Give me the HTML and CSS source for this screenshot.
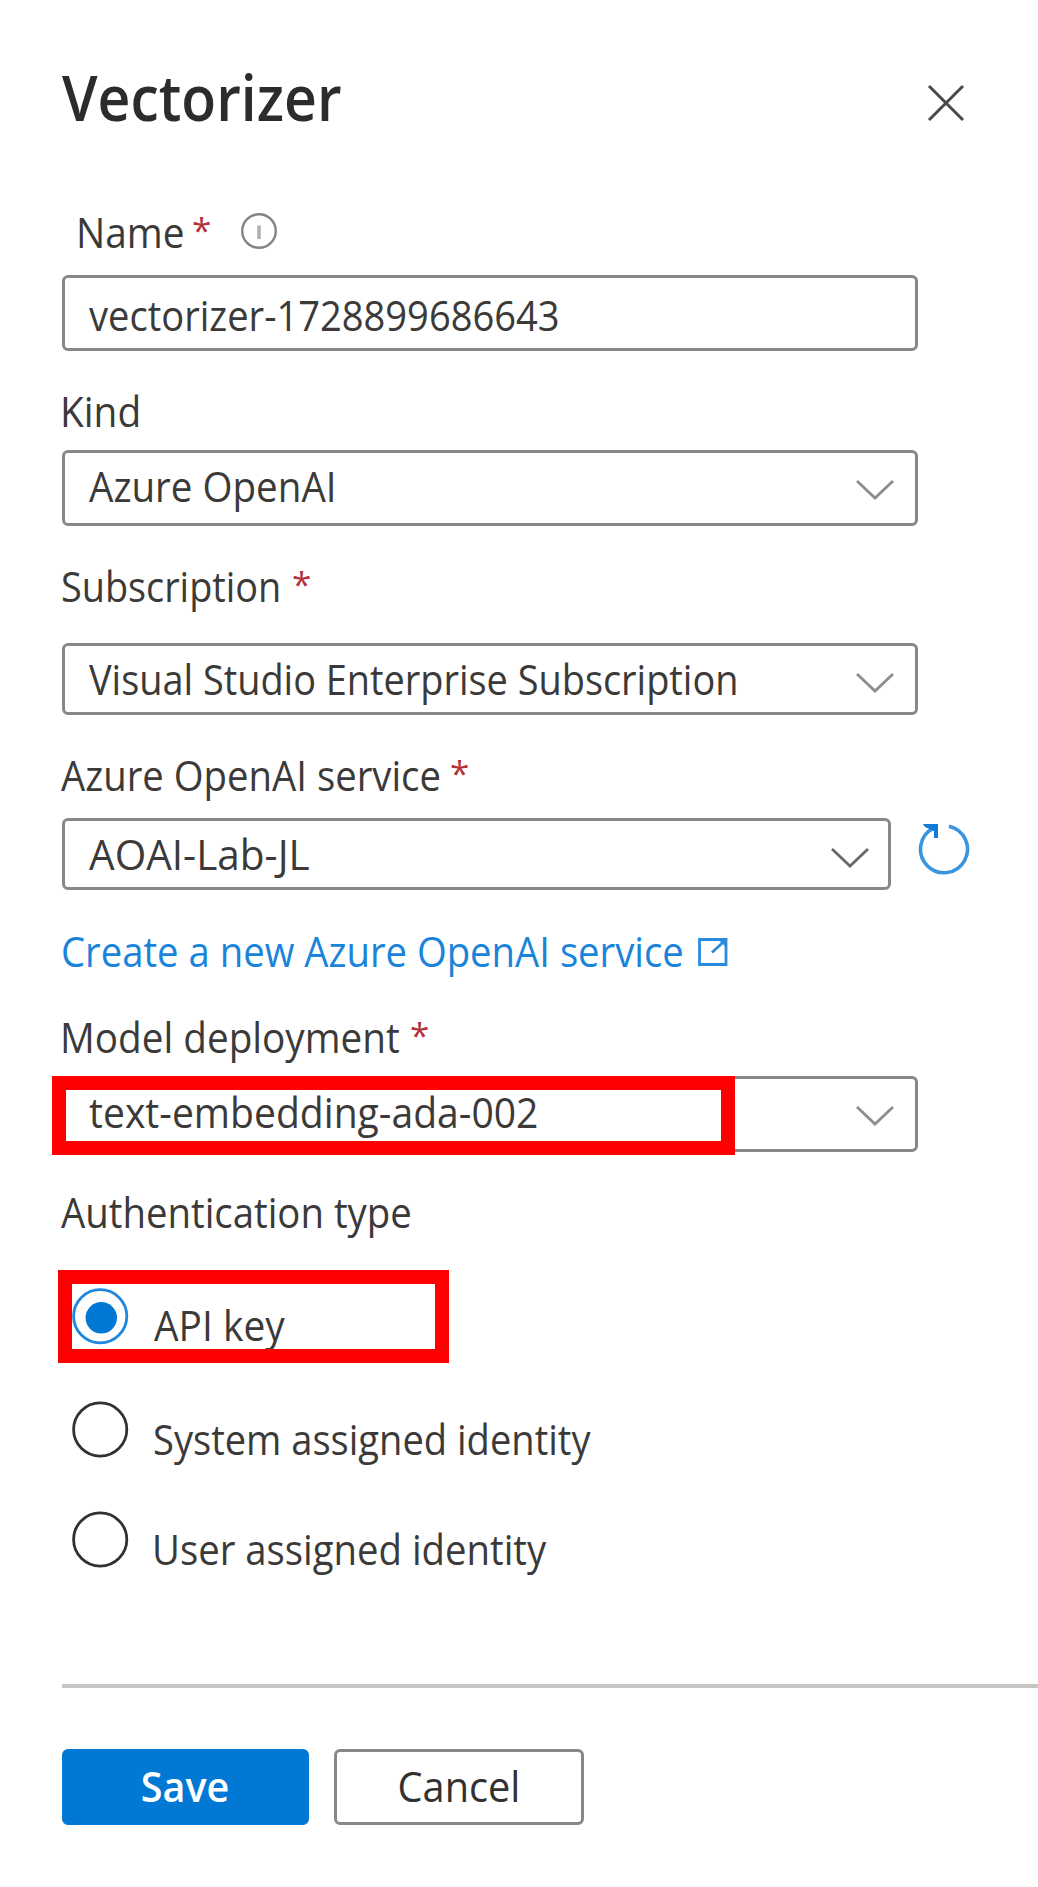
FILE: index.html
```
<!DOCTYPE html>
<html lang="en">
<head>
<meta charset="utf-8">
<title>Vectorizer</title>
<link rel="stylesheet" href="styles.css">
</head>
<body>
<main class="panel">
  <header class="header">
    <h1 class="title"><span class="fit fit-title">Vectorizer</span></h1>
    <svg class="close" width="38" height="38" viewBox="0 0 38 38"><path d="M2 2L36 36M36 2L2 36"/></svg>
  </header>

  <div class="label label-name">
    <span class="fit fit-name">Name</span><span class="star">*</span>
    <svg class="info" width="38" height="38" viewBox="0 0 38 38"><circle cx="19" cy="19" r="16.8"/><path d="M19 13.5V27"/></svg>
  </div>
  <div class="box box-name"><span class="fit fit-name-value">vectorizer-1728899686643</span></div>

  <div class="label label-kind"><span class="fit fit-kind">Kind</span></div>
  <div class="box box-kind"><span class="fit fit-openai">Azure OpenAI</span>
    <svg class="chevron" width="38" height="22" viewBox="0 0 38 22"><path d="M1 2L19 19L37 2"/></svg></div>

  <div class="label label-sub"><span class="fit fit-sub">Subscription</span><span class="star">*</span></div>
  <div class="box box-sub"><span class="fit fit-visual">Visual Studio Enterprise Subscription</span>
    <svg class="chevron" width="38" height="22" viewBox="0 0 38 22"><path d="M1 2L19 19L37 2"/></svg></div>

  <div class="label label-service"><span class="fit fit-service">Azure OpenAI service</span><span class="star">*</span></div>
  <div class="service-row">
    <div class="box box-service"><span class="fit fit-aoai">AOAI-Lab-JL</span>
      <svg class="chevron chevron-dark" width="38" height="22" viewBox="0 0 38 22"><path d="M1 2L19 19L37 2"/></svg></div>
    <svg class="refresh" width="54" height="54" viewBox="0 0 54 54"><path class="arc" d="M33 4.2A23.5 23.5 0 1 1 17 6.4"/><path class="head" d="M7 2H22V16H18V9L9 5Z"/></svg>
  </div>

  <a class="label link"><span class="fit fit-link">Create a new Azure OpenAI service</span>
    <svg class="external" width="32" height="30" viewBox="0 0 32 30"><path d="M16 2.5H2.5V27.5H29V15M29 17V2.5H16M29 2.5L15 15.5"/><path class="corner" d="M20 1.5H30V11Z"/></svg></a>

  <div class="label label-model"><span class="fit fit-model">Model deployment</span><span class="star">*</span></div>
  <div class="box box-model"><span class="fit fit-ada">text-embedding-ada-002</span>
    <svg class="chevron" width="38" height="22" viewBox="0 0 38 22"><path d="M1 2L19 19L37 2"/></svg>
    <i class="mark mark-model"></i></div>

  <div class="label label-auth"><span class="fit fit-auth">Authentication type</span></div>
  <div class="radio radio-api">
    <svg class="dial dial-on" width="57" height="57" viewBox="0 0 57 57"><circle class="ring" cx="28.2" cy="28.3" r="26.6"/><circle class="dot" cx="29.3" cy="29.8" r="15.7"/></svg>
    <span class="fit fit-api">API key</span>
    <i class="mark mark-api"></i>
  </div>
  <div class="radio radio-system">
    <svg class="dial" width="57" height="57" viewBox="0 0 57 57"><circle class="ring" cx="28.2" cy="28.5" r="26.6"/></svg>
    <span class="fit fit-system">System assigned identity</span>
  </div>
  <div class="radio radio-user">
    <svg class="dial" width="57" height="57" viewBox="0 0 57 57"><circle class="ring" cx="28.2" cy="28.5" r="26.6"/></svg>
    <span class="fit fit-user">User assigned identity</span>
  </div>

  <hr class="divider">
  <footer class="actions">
    <button class="button primary"><span class="fit fit-save">Save</span></button>
    <button class="button"><span class="fit fit-cancel">Cancel</span></button>
  </footer>
</main>
</body>
</html>
```
FILE: styles.css
```
* { box-sizing: border-box; }
body { margin: 0; background: #fff; color: #3b3a39; font: 42px/59px "Open Sans", sans-serif; }
.panel { height: 1887px; padding: 53px 0 0 62px; overflow: hidden; }
svg { display: block; flex: none; fill: none; }

.fit { display: block; flex: none; white-space: nowrap; transform: scaleX(var(--sx)); transform-origin: 0 50%; }
.fit-title { --sx: .906; }
.fit-name { --sx: .925; width: 115px; }
.fit-name-value { --sx: .907; }
.fit-kind { --sx: .925; }
.fit-openai { --sx: .918; }
.fit-sub { --sx: .9; width: 230px; }
.fit-visual { --sx: .902; }
.fit-service { --sx: .912; width: 388px; }
.fit-aoai { --sx: .965; }
.fit-link { --sx: .911; width: 636px; }
.fit-model { --sx: .921; width: 349px; }
.fit-ada { --sx: .931; }
.fit-auth { --sx: .913; }
.fit-api { --sx: .926; }
.fit-system { --sx: .907; }
.fit-user { --sx: .912; }
.fit-save { --sx: .94; transform-origin: 50% 50%; }
.fit-cancel { --sx: .945; transform-origin: 50% 50%; }

.header { display: flex; justify-content: space-between; height: 86px; padding-right: 73px; }
.title { margin: 0; font-size: 63px; font-weight: 600; line-height: 88px; color: #2d2c2b; }
.close { margin-top: 31px; stroke: #4a4948; stroke-width: 3; }

.label { display: flex; height: 57px; margin-left: -1px; }
.label-name { margin: 63px 0 0 14px; }
.label-kind { margin: 30px 0 0 -2px; }
.label-sub { margin-top: 30px; }
.label-service { margin-top: 30px; }
.label-model { margin: 29px 0 0 -2px; }
.label-auth { margin-top: 30px; }
.star { width: 20px; margin-left: 1px; color: #b5313a; font-size: 35px; line-height: 56px; }
.info { margin: 10px 0 0 28px; stroke: #858483; stroke-width: 2.4; }
.info path { stroke: #b0afae; stroke-width: 3.5; }

.box { display: flex; justify-content: space-between; position: relative; width: 856px; height: 76px; padding: 3px 21px 0 24px; border: 3px solid #8a8886; border-radius: 6px; }
.box-name { margin-top: 16px; padding-top: 7px; }
.box-kind { margin-top: 12px; }
.box-sub { height: 72px; margin-top: 30px; }
.box-service { width: 829px; height: 72px; padding-right: 19px; }
.box-model { margin-top: 12px; }
.chevron { margin-top: 23px; stroke: #8f8d8c; stroke-width: 2.8; }
.chevron-dark { stroke: #6b6967; }

.service-row { display: flex; gap: 25px; margin-top: 16px; }
.refresh { margin-top: 4px; }
.refresh .arc { stroke: #3a95df; stroke-width: 3.6; }
.refresh .head { fill: #0f7dd8; }

.link { margin-top: 31px; color: #1a84db; }
.external { margin-top: 16px; stroke: #2a8bdd; stroke-width: 2.8; }
.external .corner { fill: #2a8bdd; stroke: none; }

.radio { display: flex; gap: 26px; position: relative; height: 57px; margin-left: 10px; }
.radio-api { margin-top: 49px; }
.radio-system { margin-top: 56px; }
.radio-user { margin-top: 53px; }
.radio .fit { padding-top: 8px; }
.radio-api .fit { margin-left: -1px; padding-top: 7px; }
.radio-system .fit { margin-left: -2px; }
.radio-user .fit { margin-left: -3px; }
.dial .ring { stroke: #323130; stroke-width: 2.8; }
.dial-on .ring { stroke: #2187dc; }
.dial-on .dot { fill: #0078d4; }

/* Red callout frames drawn over the form */
.mark { position: absolute; border: 14px solid #f00; }
.mark-model { left: -13px; top: -3px; width: 683px; height: 79px; }
.mark-api { left: -14px; top: -18px; width: 391px; height: 93px; }

.divider { height: 4px; margin: 116px 0 0; border: 0; background: #c8c6c4; }
.actions { display: flex; gap: 25px; margin-top: 61px; }
.button { display: flex; justify-content: center; width: 250px; height: 76px; padding: 4px 0 0; border: 3px solid #8a8886; border-radius: 6px; background: #fff; color: #323130; font: inherit; }
.primary { width: 247px; border-color: #0078d4; background: #0078d4; color: #fff; font-weight: 600; }
```
